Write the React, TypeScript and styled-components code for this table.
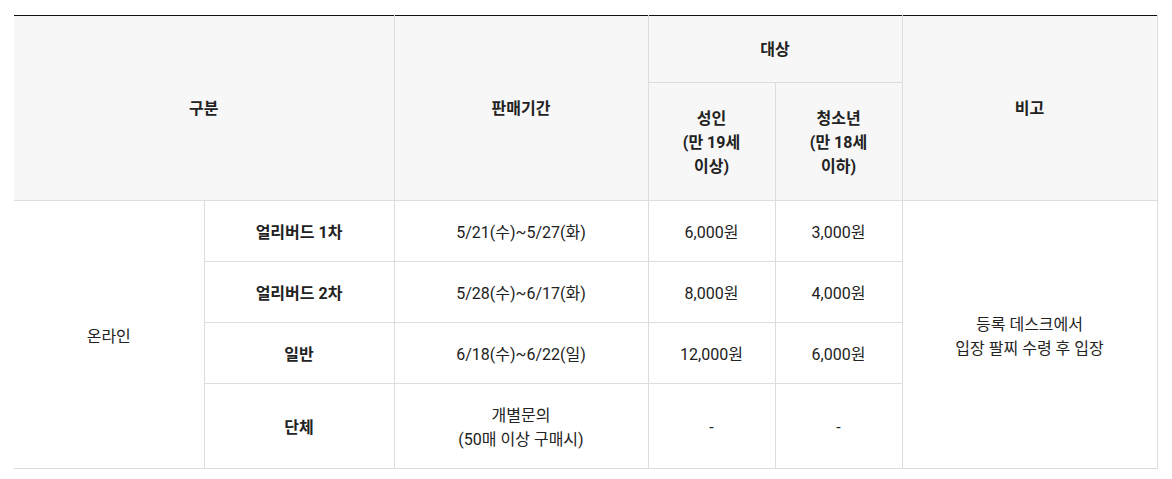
import React from 'react';
import styled, { createGlobalStyle } from 'styled-components';

const GlobalStyle = createGlobalStyle`
  body {
    margin: 0;
    background: #fff;
    font-family: Roboto, "Noto Sans CJK KR", sans-serif;
    color: #222;
  }
`;

const Wrapper = styled.div`
  padding: 15px 15px 0 14px;
`;

const Table = styled.table`
  width: 1143px;
  border-collapse: collapse;
  table-layout: fixed;
  border-top: 1px solid #111;
  font-size: 16px;
  line-height: 24px;
  text-align: center;
  word-break: keep-all;
`;

const Th = styled.th<{ $tall?: boolean }>`
  background: #f7f7f7;
  font-weight: 700;
  padding: ${({ $tall }) => ($tall ? '24px 20px 21px' : '22px 20px 20px')};
  border: 1px solid #ddd;
  border-top: none;
  vertical-align: middle;
  &:first-child {
    border-left: none;
  }
`;

const Td = styled.td<{ $bold?: boolean }>`
  padding: 20px 20px 16px;
  border: 1px solid #ddd;
  font-weight: ${({ $bold }) => ($bold ? 700 : 400)};
  vertical-align: middle;
  &:first-child {
    border-left: none;
  }
`;

const rows = [
  { name: '얼리버드 1차', period: '5/21(수)~5/27(화)', adult: '6,000원', youth: '3,000원' },
  { name: '얼리버드 2차', period: '5/28(수)~6/17(화)', adult: '8,000원', youth: '4,000원' },
  { name: '일반', period: '6/18(수)~6/22(일)', adult: '12,000원', youth: '6,000원' },
  { name: '단체', period: '개별문의\n(50매 이상 구매시)', adult: '-', youth: '-' },
];

const Lines: React.FC<{ text: string }> = ({ text }) => (
  <>
    {text.split('\n').map((line, i) => (
      <React.Fragment key={i}>
        {i > 0 && <br />}
        {line}
      </React.Fragment>
    ))}
  </>
);

export default function App() {
  return (
    <Wrapper>
      <GlobalStyle />
      <Table>
        <colgroup>
          <col style={{ width: 190 }} />
          <col style={{ width: 190 }} />
          <col style={{ width: 254 }} />
          <col style={{ width: 127 }} />
          <col style={{ width: 127 }} />
          <col style={{ width: 255 }} />
        </colgroup>
        <thead>
          <tr>
            <Th colSpan={2} rowSpan={2}>구분</Th>
            <Th rowSpan={2}>판매기간</Th>
            <Th colSpan={2}>대상</Th>
            <Th rowSpan={2}>비고</Th>
          </tr>
          <tr>
            <Th $tall>성인<br />(만 19세 이상)</Th>
            <Th $tall>청소년<br />(만 18세 이하)</Th>
          </tr>
        </thead>
        <tbody>
          {rows.map((row, i) => (
            <tr key={row.name}>
              {i === 0 && <Td rowSpan={rows.length}>온라인</Td>}
              <Td $bold>{row.name}</Td>
              <Td><Lines text={row.period} /></Td>
              <Td>{row.adult}</Td>
              <Td>{row.youth}</Td>
              {i === 0 && (
                <Td rowSpan={rows.length}>
                  등록 데스크에서<br />입장 팔찌 수령 후 입장
                </Td>
              )}
            </tr>
          ))}
        </tbody>
      </Table>
    </Wrapper>
  );
}
